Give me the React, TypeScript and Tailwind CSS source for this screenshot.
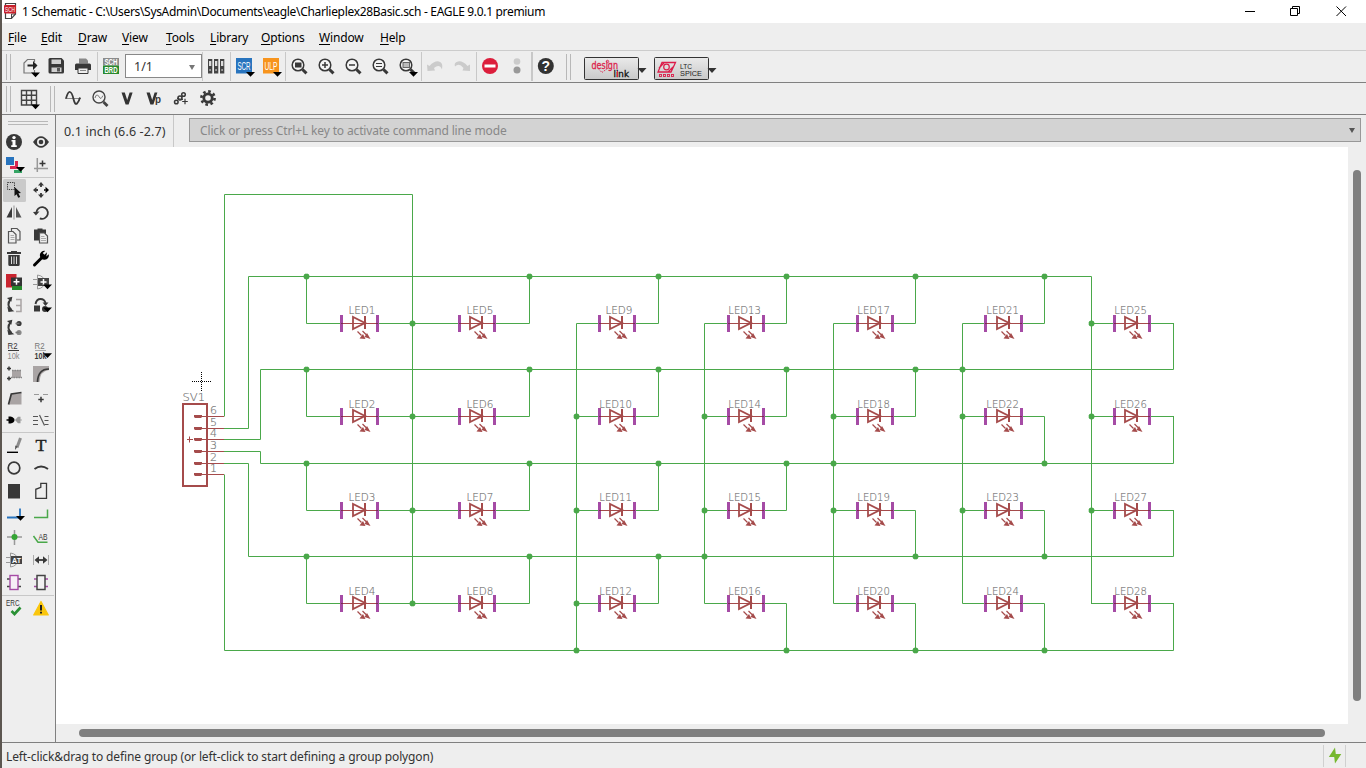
import React from "react";

const DARK = "#383838";
const GRAY = "#a9a4a4";
const GREEN = "#4aa84a";
const RED = "#a54b4b";
const PURPLE = "#a54ba5";

/* Drop-down marker under a tool button, x/y is the left top corner. */
const Drop = ({ x, y }: { x: number; y: number }) => (
  <path d={`M${x} ${y}h9l-4.5 4.8z`} fill="#000" />
);

const Plus = ({ x, y, r = 2.5, w = 1.5, c = DARK }: { x: number; y: number; r?: number; w?: number; c?: string }) => (
  <path d={`M${x - r} ${y}h${2 * r}M${x} ${y - r}v${2 * r}`} stroke={c} strokeWidth={w} fill="none" />
);

const IconText = ({ x, y, s, w, c = DARK, b = false, children }: { x: number; y: number; s: number; w: number; c?: string; b?: boolean; children: string }) => (
  <text x={x} y={y} fontSize={s} textLength={w} lengthAdjust="spacingAndGlyphs" fill={c} fontWeight={b ? 700 : 400} fontFamily="'Liberation Sans', sans-serif">
    {children}
  </text>
);

/* ---------- side palette ---------- */

const section1 = [
  <>
    <circle cx="14" cy="142" r="8" fill={DARK} />
    <circle cx="14" cy="137.6" r="1.7" fill="#fff" />
    <path d="M11.500 140h4v5.300h1.300v1.600h-5.600v-1.600h1.300v-3.700h-1z" fill="#fff" />
  </>,
  <>
    <path d="M33 142q8-11.5 16 0q-8 11.5-16 0z" fill={DARK} />
    <circle cx="41" cy="142" r="4" fill="#eee" />
    <circle cx="41" cy="142" r="2.3" fill={DARK} />
  </>,
  <>
    <rect x="6" y="157" width="8" height="8" fill="#2874be" />
    <path d="M15 161h3v8h-8v-3h5z" fill="#da2550" />
    <path d="M14 170h8v3h-8z" fill="#35a565" />
    <Drop x={16} y={167} />
  </>,
  <>
    <path d="M37.3 158v14M34 168.6h14" stroke="#999" strokeWidth="1.500" />
    <Plus x={42.5} y={163.5} r={3} />
  </>,
];

const section2 = [
  <>
    <rect x="3" y="179" width="23" height="23" rx="1.5" fill="#cacaca" />
    <rect x="7.5" y="182.5" width="7" height="7" fill="none" stroke={DARK} strokeDasharray="1.3 1" />
    <path d="M14.500 187l6.500 6-2.600.3 1.800 3.600-2 .9-1.600-3.600-2.100 1.700z" fill="#111" />
  </>,
  <>
    <path d="M41 182l3 3.500h-6zM41 198l3-3.500h-6zM33 190l3.500-3v6z" fill={DARK} />
    <path d="M49 190l-3.500-3.300v6.600z" fill="#000" />
    <path d="M41 185v2M41 193v2M36 190h2M44 190h2" stroke={DARK} strokeWidth="1.8" />
  </>,
  <>
    <path d="M6.500 217.500h5.500v-10.500z" fill={DARK} />
    <path d="M21.500 217.500h-5.500v-10.500z" fill="#555" />
    <path d="M14 205.500v14" stroke="#b5b5b5" strokeWidth="1.6" />
  </>,
  <>
    <path d="M36.300 213a5.800 5.800 0 1 1 3.500 5.300" fill="none" stroke={DARK} strokeWidth="1.800" />
    <path d="M33 212l6.500-.5-3.600 4z" fill={DARK} />
  </>,
  <>
    <path d="M11.500 231v-2.500h5.500l3 3v8.500h-3" fill="none" stroke="#555" strokeWidth="1.200" />
    <path d="M8.500 231.500h4.500l3 3v8.500h-7.500z" fill="#eee" stroke="#555" strokeWidth="1.200" />
    <path d="M10.500 235.500h3.500M10.500 237.500h4M10.500 239.500h4" stroke="#999" strokeWidth=".8" />
  </>,
  <>
    <path d="M34 229.500h3.500v-1h5v1h3.500v11h-12z" fill={DARK} />
    <path d="M39.500 233h5l3 3v7h-8z" fill="#eee" stroke="#555" strokeWidth="1.200" />
    <path d="M41 236.500h3.500M41 238.500h5M41 240.500h5" stroke="#999" strokeWidth=".8" />
  </>,
  <>
    <path d="M7 254h14v-2h-4v-1h-6v1h-4zM8.300 255h11.400v9.500a1.500 1.500 0 0 1-1.500 1.500h-8.400a1.500 1.500 0 0 1-1.500-1.500z" fill={DARK} />
    <path d="M11.500 256.500v7.500M14 256.500v7.500M16.500 256.500v7.500" stroke="#ddd" strokeWidth="1" />
  </>,
  <>
    <path d="M34.500 265l8-8" stroke="#000" strokeWidth="3" strokeLinecap="round" />
    <path d="M47 252.300l-2.500 2.400-1.800-1.600 2.500-2.200a4.500 4.500 0 1 0 3.500 3.300l-2.400 2.400z" fill="#000" />
  </>,
  <>
    <rect x="6" y="274" width="10.500" height="13.500" fill="#c9242f" />
    <rect x="12" y="283" width="10" height="7" fill="#268a2c" />
    <rect x="11" y="277.500" width="11" height="8.500" fill="#333" />
    <Plus x={16.500} y={281.700} c="#fff" r={3} />
  </>,
  <>
    <path d="M33 279.500h5M33 284.500h5M37.500 275v14q7-1 7-7t-7-7" fill="none" stroke="#999" />
    <rect x="38" y="278" width="11" height="8" fill="#444" />
    <Plus x={43.500} y={282} c="#fff" r={3} />
    <Drop x={43} y={284.500} />
  </>,
  <>
    <path d="M10.500 299.500q-4.500 5 1 10.500" fill="none" stroke={DARK} strokeWidth="1.900" />
    <path d="M8.500 297.500h5.500l-2 4.500zM7 306l0 5.500 6 .5z" fill={DARK} transform="rotate(-12 10 305)" />
    <path d="M16 299.500h5v12h-5M16 305.500h5" fill="none" stroke={GRAY} strokeWidth="1.500" />
  </>,
  <>
    <path d="M35.500 304q1-5 5-5t5 4" fill="none" stroke={DARK} strokeWidth="1.900" />
    <path d="M42.500 302.500h6l-3 3.500z" fill={DARK} />
    <rect x="34" y="305.500" width="6" height="6" fill={DARK} />
    <circle cx="45" cy="309" r="3" fill={DARK} />
    <Drop x={43} y={307.500} />
  </>,
  <>
    <path d="M10.500 322.500q-4.500 5 1 10.500" fill="none" stroke={DARK} strokeWidth="1.900" />
    <path d="M8.500 320.500h5.500l-2 4.500zM7 329l0 5.500 6 .5z" fill={DARK} transform="rotate(-12 10 328)" />
    <circle cx="19" cy="323.500" r="2.600" fill={DARK} />
    <circle cx="19" cy="332.500" r="2.600" fill="#888" />
    <path d="M15.500 323.500h4M15.500 332.500h4" stroke="#777" strokeWidth="1.500" />
  </>,
  null,
  <>
    <IconText x={7.500} y={349} s={8.500} w={10}>R2</IconText>
    <path d="M8 350.500h11" stroke={DARK} />
    <IconText x={7.500} y={359} s={8.500} w={12} c="#888">10k</IconText>
  </>,
  <>
    <IconText x={34.500} y={349} s={8.500} w={10} c="#777">R2</IconText>
    <path d="M35 350.500h11" stroke="#aaa" />
    <IconText x={34.500} y={359} s={8.500} w={12} b>10k</IconText>
    <Drop x={43} y={353.200} />
  </>,
  <>
    <Plus x={9} y={368.500} r={2} />
    <Plus x={9} y={378.500} r={2} />
    <path d="M12 370h9v8h-9z" fill={GRAY} />
    <path d="M12 370.500h10M11 377.500h11" stroke="#888" strokeDasharray="1.500 1" strokeWidth="1.500" />
  </>,
  <>
    <path d="M33 366h16v4q-9 1-9.500 12h-6.500z" fill={GRAY} />
    <path d="M49 369q-11 0-11.500 13" fill="none" stroke={DARK} strokeWidth="1.700" />
  </>,
  <>
    <path d="M9 404.500l2-10.500 10.500-1v11.500z" fill={GRAY} />
    <path d="M8.500 404.500l2.800-10.500 10.200-1.500" fill="none" stroke={DARK} strokeWidth="1.700" />
  </>,
  <>
    <path d="M34 394.500h5M43 394.500h5" stroke="#999" strokeWidth="1.200" />
    <Plus x={41} y={399.500} r={2.700} />
  </>,
  <>
    <path d="M6.500 420h5" stroke="#000" strokeWidth="1.500" />
    <path d="M8.500 416.500h2q4 1 4 3.500t-4 3.500h-2z" fill="#000" />
    <path d="M22 420h-3" stroke="#aaa" />
    <path d="M15 420l3-3.200h2.500v6.400h-2.500z" fill="#999" />
  </>,
  <>
    <path d="M33 416.500h5M33 420.500h5M33 424.500h5M44.500 416.500h4M44.500 420.500h4M44.500 424.500h4" stroke="#555" strokeWidth="1.200" />
    <path d="M39.500 415l5 10.500" stroke="#555" strokeWidth="1.200" />
  </>,
];

const section3 = [
  <>
    <path d="M20.500 438l-3.500 9.500" stroke="#8c8c8c" strokeWidth="3" />
    <path d="M17.800 446.500l-2.800 3.500.3-4.500z" fill="#555" />
    <path d="M7 452.300h11" stroke="#000" strokeWidth="1.400" />
  </>,
  <text x="35.500" y="451" fontSize="17" textLength="11" lengthAdjust="spacingAndGlyphs" fill="#222" stroke="#222" strokeWidth=".4" fontFamily="'Liberation Serif', serif">T</text>,
  <circle cx="14" cy="468" r="5.800" fill="none" stroke={DARK} strokeWidth="1.700" />,
  <path d="M34.500 469q6.500-5 13.500 0" fill="none" stroke={DARK} strokeWidth="1.900" />,
  <rect x="8" y="484" width="12" height="14.500" fill={DARK} />,
  <path d="M35.800 498.300v-9l5-2v-4h5.700v15z" fill="none" stroke={DARK} strokeWidth="1.300" />,
  <>
    <path d="M7 517.500h13v-9" fill="none" stroke="#2874be" strokeWidth="1.800" />
    <Drop x={16} y={516} />
  </>,
  <path d="M34 517.500h13.500v-8" fill="none" stroke={GREEN} strokeWidth="1.500" />,
  <>
    <path d="M7 537h15M14.500 530v15" stroke="#999" strokeWidth="1.500" />
    <circle cx="14.500" cy="537" r="3" fill="#35a535" />
  </>,
  <>
    <path d="M33.500 536l4.500 6.300h9.500" fill="none" stroke={GREEN} strokeWidth="1.500" />
    <IconText x={38.500} y={540} s={9} w={9}>AB</IconText>
  </>,
  <>
    <path d="M6 557.500h5M6 562.500h5M10.500 553v14q7-1 7-7t-7-7" fill="none" stroke="#999" />
    <rect x="11" y="556" width="11" height="8" fill="#444" />
    <IconText x={12} y={563} s={7.500} w={9} c="#fff" b>AT</IconText>
  </>,
  <>
    <path d="M33.500 555v10M48.500 555v10" stroke="#aaa" />
    <path d="M37 560h8" stroke={DARK} strokeWidth="1.800" />
    <path d="M34.500 560l4.500-3.800v7.600zM47.500 560l-4.500-3.800v7.600z" fill={DARK} />
  </>,
  <>
    <path d="M7 579h3M7 586.500h3M18 579h3M18 586.500h3" stroke="#444" strokeWidth="1.300" />
    <rect x="10" y="575.500" width="8" height="14" fill="#f7eef7" stroke={PURPLE} strokeWidth="1.400" />
  </>,
  <>
    <path d="M34 579h3M34 586.500h3M45 579h3M45 586.500h3" stroke={PURPLE} strokeWidth="1.300" />
    <rect x="37" y="575.500" width="8" height="14" fill="#f2f2f2" stroke="#444" strokeWidth="1.500" />
  </>,
];

const section4 = [
  <>
    <IconText x={6} y={606} s={9} w={13.5}>ERC</IconText>
    <path d="M11.500 611l3 3 6-6.500" fill="none" stroke="#2a9135" strokeWidth="2.600" />
  </>,
  <>
    <path d="M41 601.500l7.300 13.500h-14.600z" fill="#fac60d" stroke="#fac60d" strokeLinejoin="round" strokeWidth="1.200" />
    <path d="M41 605v5.500M41 611.800v1.800" stroke="#222" strokeWidth="2" />
  </>,
];

const ToolGrid = ({ top, items }: { top: number; items: (React.ReactElement | null)[] }) => (
  <div className="grid w-[51px] grid-cols-[24px_24px] gap-x-[3px]">
    {items.map((item, i) => (
      <svg key={i} className="block" width="24" height="23" viewBox={`${i % 2 ? 29 : 2} ${top + 23 * Math.floor(i / 2)} 24 23`}>
        {item}
      </svg>
    ))}
  </div>
);

const SideRule = () => <div className="mb-px h-px w-[52px] bg-[#c8c8c8]" />;

/* ---------- top toolbars ---------- */

const Cell = ({ x, y = 51, w = 27, children }: { x: number; y?: number; w?: number; children: React.ReactNode }) => (
  <svg className="block shrink-0" width={w} height="31" viewBox={`${x} ${y} ${w} 31`}>
    {children}
  </svg>
);

const Sep = () => <div className="mt-px h-[29px] w-px shrink-0 bg-[#c8c8c8]" />;
const Handle = () => <div className="mt-[3px] h-[26px] w-[5px] shrink-0 border-x border-[#b8b8b8]" />;

const Lens = ({ x, children }: { x: number; children?: React.ReactNode }) => (
  <>
    <circle cx={x - 1} cy="65" r="5.800" fill="#f4f4f4" stroke={DARK} strokeWidth="1.500" />
    <path d={`M${x + 3.500} 69.500l4 3.800`} stroke={DARK} strokeWidth="3" />
    {children}
  </>
);

const MainToolbar = () => (
  <div className="flex h-8 shrink-0 border-b border-[#808080] pl-1">
    <Handle />
    <div className="w-1.5 shrink-0" />
    <Cell x={17}>
      <path d="M34.500 62v-2.500h-7l-3.500 3.500v10h10.500v-3" fill="none" stroke="#777" strokeWidth="1.200" />
      <path d="M27.500 64.500h5.500v-3.500l4.500 4.500-4.500 4.500v-3.500h-5.500z" fill="#222" />
      <Drop x={31} y={72.500} />
    </Cell>
    <Cell x={44} w={26}>
      <path d="M48.500 59.500q0-1.500 1.500-1.500h11.500l2.500 2.500v11.500q0 1.500-1.500 1.500h-12.500q-1.500 0-1.500-1.500z" fill={DARK} />
      <path d="M51.500 59.500h9.500v4.500h-9.500zM51.500 67.500h10v4.500h-10z" fill="#d0d0d0" />
      <path d="M57 68h3v3.500h-3z" fill="#555" />
    </Cell>
    <Cell x={70}>
      <path d="M79 58.500h7l2 2v3h-9z" fill="#888" />
      <path d="M75 65q0-1.500 1.500-1.500h13q1.500 0 1.500 1.500v5h-16z" fill={DARK} />
      <path d="M78 68h10v5.500h-10z" fill="#eee" stroke={DARK} />
      <path d="M80 70.500h6" stroke="#888" />
    </Cell>
    <Sep />
    <Cell x={98}>
      <rect x="103" y="58" width="16" height="7.500" fill="#8b8b8b" />
      <rect x="103" y="65.500" width="16" height="8.500" fill="#2a8a2e" />
      <IconText x={104.500} y={65} s={8.500} w={13} c="#fff" b>SCH</IconText>
      <IconText x={104.500} y={73} s={8.500} w={13} c="#fff" b>BRD</IconText>
    </Cell>
    <div className="mt-[3px] flex h-6 w-[77px] shrink-0 items-center justify-between border border-[#888] bg-white pt-0.5 pr-1.5 pl-2 text-[12.500px] text-[#333]">
      <span>1/1</span>
      <svg width="6" height="5" viewBox="0 0 6 5"><path d="M0 0h6l-3 5z" fill="#777" /></svg>
    </div>
    <Sep />
    <Cell x={203}>
      {[208, 214, 220].map((x) => (
        <g key={x}>
          <rect x={x} y="59" width="4.300" height="14.500" fill="#444" />
          <rect x={x + 1} y="61" width="2.300" height="5" fill="#ddd" />
          <rect x={x + 1.200} y="69" width="1.800" height="2" fill="#999" />
        </g>
      ))}
    </Cell>
    <Sep />
    <Cell x={231}>
      <rect x="236" y="58" width="16" height="15.500" fill="#2874be" />
      <IconText x={237.500} y={69.500} s={10} w={13} c="#fff">SCR</IconText>
      <Drop x={246} y={72} />
    </Cell>
    <Cell x={258}>
      <rect x="263" y="58" width="16" height="15.500" fill="#f7941d" />
      <IconText x={264.500} y={69.500} s={10} w={13} c="#fff">ULP</IconText>
      <Drop x={273} y={72} />
    </Cell>
    <Sep />
    <Cell x={286}>
      <Lens x={299}><rect x="295" y="62.500" width="6.500" height="5" fill={DARK} /></Lens>
    </Cell>
    <Cell x={313}><Lens x={326}><Plus x={325} y={65} r={3} /></Lens></Cell>
    <Cell x={340}><Lens x={353}><path d="M349 65h6" stroke={DARK} strokeWidth="1.500" /></Lens></Cell>
    <Cell x={367}><Lens x={380}><path d="M376 63.500h6M376 66.500h6" stroke={DARK} strokeWidth="1.200" /></Lens></Cell>
    <Cell x={394}>
      <Lens x={407}><rect x="403" y="62.500" width="6.500" height="5" fill="#bbb" stroke="#666" /></Lens>
      <Drop x={409} y={72} />
    </Cell>
    <Sep />
    <Cell x={422}>
      <path d="M427 64.500l2.500 1.500q5-5.500 9.500-4.500t3 8q-2.500-6-8-1.500l1 2.500-7.500.5z" fill="#cbcbcb" />
    </Cell>
    <Cell x={449}>
      <path d="M470 64.500l-2.500 1.500q-5-5.500-9.500-4.500t-3 5q4-4 8.500 1.500l-1 2.500 7.500.5z" fill="#cbcbcb" />
    </Cell>
    <Sep />
    <Cell x={477}>
      <circle cx="490" cy="66" r="8" fill="#dc1e3c" />
      <rect x="484.500" y="64.500" width="11" height="3" fill="#fff" />
    </Cell>
    <Cell x={504}>
      <circle cx="517" cy="61.500" r="3.300" fill="#cbcbcb" />
      <circle cx="517" cy="70" r="3.500" fill="#999" />
    </Cell>
    <div className="mt-px h-[29px] w-0.5 shrink-0 bg-[#c8c8c8]" />
    <Cell x={533}>
      <circle cx="545.800" cy="66" r="8" fill="#333" />
      <text x="541.500" y="71" fontSize="14" fontWeight="700" fill="#fff" fontFamily="'Liberation Sans', sans-serif">?</text>
    </Cell>
    <div className="w-1.5 shrink-0" />
    <Handle />
    <div className="w-[13px] shrink-0" />
    <Cell x={584} w={70}>
      <defs>
        <linearGradient id="btn" x1="0" y1="0" x2="0" y2="1">
          <stop offset="0" stopColor="#eaeaea" />
          <stop offset="1" stopColor="#c9c9c9" />
        </linearGradient>
      </defs>
      <rect x="584.500" y="57.500" width="54" height="22" rx="1" fill="url(#btn)" stroke="#333" />
      <text x="591.500" y="69" fontSize="10" textLength="26.500" lengthAdjust="spacingAndGlyphs" fill="#dc1e4b" stroke="#dc1e4b" strokeWidth=".3" fontFamily="'DejaVu Sans', sans-serif">design</text>
      <path d="M599 69.500l3 3 6-4.500" fill="none" stroke="#dc1e4b" strokeDasharray="1.200 1" />
      <circle cx="607.500" cy="61.500" r="1.200" fill="none" stroke="#dc1e4b" strokeWidth=".9" />
      <text x="613.500" y="77" fontSize="9" textLength="15.500" lengthAdjust="spacingAndGlyphs" fill="#111" stroke="#111" strokeWidth=".3" fontFamily="'DejaVu Sans', sans-serif">link</text>
      <path d="M617.500 71v6" stroke="#dc1e4b" />
      <path d="M637.500 68h9l-4.500 5z" fill="#333" />
    </Cell>
    <Cell x={654} w={70}>
      <rect x="654.500" y="57.500" width="54" height="22" rx="1" fill="url(#btn)" stroke="#333" />
      <path d="M662 62.500h13.500l-4.500 9.500h-13zM659 68l5-5M668 72l5-5" fill="none" stroke="#dc1e4b" strokeWidth="1.300" />
      <circle cx="666.500" cy="67" r="2.800" fill="none" stroke="#dc1e4b" strokeWidth="1.200" />
      {[659.500, 663.500, 667.500, 671.500].map((x) => (
        <rect key={x} x={x} y="74.500" width="2" height="2" fill="none" stroke="#dc1e4b" strokeWidth=".9" />
      ))}
      <IconText x={680} y={69} s={7} w={12} c="#222">LTC</IconText>
      <IconText x={680} y={76} s={7} w={22} c="#222">SPICE</IconText>
      <path d="M707.500 68h9l-4.500 5z" fill="#333" />
    </Cell>
  </div>
);

const SimToolbar = () => (
  <div className="flex h-8 shrink-0 border-b border-[#808080] pl-1">
    <Handle />
    <div className="w-1.5 shrink-0" />
    <Cell x={17} y={83}>
      <path d="M21.500 90.500h15v14.500h-15zM21.500 95.300h15M21.500 100.200h15M26.500 90.500v14.500M31.500 90.500v14.500" fill="none" stroke="#444" strokeWidth="1.400" />
      <Drop x={31} y={104.500} />
    </Cell>
    <div className="w-1.5 shrink-0" />
    <Handle />
    <div className="w-1 shrink-0" />
    <Cell x={59} y={83}>
      <path d="M65 98.500h16" stroke="#888" />
      <path d="M66 98.500q2-7 4-6.500t3.500 7t3.500 4.500t3-6" fill="none" stroke={DARK} strokeWidth="1.800" />
    </Cell>
    <Cell x={86} y={83}>
      <circle cx="99" cy="97" r="6" fill="#f2f2f2" stroke="#444" strokeWidth="1.400" />
      <path d="M95 98q1.500-5 3.500-2t2.500 2.500t2-3" fill="none" stroke="#777" />
      <path d="M103.500 102l4 4" stroke="#444" strokeWidth="2.800" />
    </Cell>
    <Cell x={113} y={83}>
      <path d="M121.500 92.500h3.300l2.400 7.500 2.400-7.500h3l-4 12h-3z" fill="#333" />
    </Cell>
    <Cell x={140} y={83}>
      <path d="M146.500 92.500h3.300l2.400 7.500 2.400-7.500h2.800l-4 12h-3z" fill="#333" />
      <IconText x={155} y={103} s={10} w={6} b>p</IconText>
    </Cell>
    <Cell x={167} y={83}>
      <circle cx="183.500" cy="94.500" r="1.800" fill="none" stroke={DARK} strokeWidth="1.500" />
      <circle cx="180" cy="98" r="2" fill="none" stroke={DARK} strokeWidth="1.600" />
      <circle cx="176.300" cy="102" r="1.800" fill="none" stroke={DARK} strokeWidth="1.500" />
      <path d="M177 98.500l6 1" stroke={DARK} />
      <Plus x={185} y={101.500} r={2.800} w={1.200} />
    </Cell>
    <Cell x={194} y={83}>
      <circle cx="208" cy="98" r="6.600" fill="none" stroke={DARK} strokeWidth="2.600" strokeDasharray="2.590 2.590" />
      <circle cx="208" cy="98" r="4.200" fill="none" stroke={DARK} strokeWidth="2.800" />
    </Cell>
  </div>
);

/* ---------- schematic ---------- */

const rows = [323, 416, 510, 603];
const columns = [340, 458, 598, 727, 856, 984, 1113];

const wires = [
  "M224.500 416.500V194.500H412.500V603.500",
  "M224 428.500H248.500V276.500H1091.500V603.500",
  "M224 439.500H260.500V369.500H1173.500V323.500",
  "M224 451.500H260.500V463.500H1173.500V416.500",
  "M224 463.500H248.500V556.500H1173.500V510.500",
  "M224.500 474.500V650.500H1173.500V603.500",
  "M306.500 276.500V323.500H341M306.500 369.500V416.500H341M306.500 463.500V510.500H341M306.500 556.500V603.500H341",
  "M377 323.500H460M377 416.500H460M377 510.500H460M377 603.500H460",
  "M494 323.500H529.500V276.500M494 416.500H529.500V369.500M494 510.500H529.500V463.500M494 603.500H529.500V556.500",
  "M600 323.500H576.500V650.500M600 416.500H576.500M600 510.500H576.500M600 603.500H576.500",
  "M634 323.500H658.500V276.500M634 416.500H658.500V369.500M634 510.500H658.500V463.500M634 603.500H658.500V556.500",
  "M729 323.500H704.500V603.500H729M729 416.500H704.500M729 510.500H704.500",
  "M763 323.500H786.500V276.500M763 416.500H786.500V369.500M763 510.500H786.500V463.500M763 603.500H786.500V650.500",
  "M858 323.500H833.500V603.500H858M858 416.500H833.500M858 510.500H833.500",
  "M892 323.500H915.500V276.500M892 416.500H915.500V369.500M892 510.500H915.500V556.500M892 603.500H915.500V650.500",
  "M986 323.500H962.500V603.500H986M986 416.500H962.500M986 510.500H962.500",
  "M1020 323.500H1044.500V276.500M1020 416.500H1044.500V463.500M1020 510.500H1044.500V556.500M1020 603.500H1044.500V650.500",
  "M1091 323.500H1115M1091 416.500H1115M1091 510.500H1115M1091 603.500H1115",
  "M1149 323.500H1174M1149 416.500H1174M1149 510.500H1174M1149 603.500H1174",
];

const junctions: [number, number[]][] = [
  [306, [276, 369, 463, 556]],
  [412, [323, 416, 510, 603]],
  [529, [276, 369, 463, 556]],
  [576, [416, 510, 603, 650]],
  [658, [276, 369, 463, 556]],
  [704, [416, 510, 556]],
  [786, [276, 369, 463, 650]],
  [833, [416, 463, 510]],
  [915, [276, 369, 556, 650]],
  [962, [369, 416, 510]],
  [1044, [276, 463, 556, 650]],
  [1091, [323, 416, 510]],
];

const pins: [number, number][] = [[6, 416], [5, 428], [4, 439], [3, 451], [2, 463], [1, 474]];

const VectorText = ({ x, y, s = 11, w, children }: { x: number; y: number; s?: number; w: number; children: React.ReactNode }) => (
  <text x={x} y={y} fontSize={s} fontWeight="200" textLength={w} lengthAdjust="spacingAndGlyphs" fill="#707070" stroke="#707070" strokeWidth=".15" fontFamily="'DejaVu Sans Light', 'DejaVu Sans', sans-serif">
    {children}
  </text>
);

const Led = ({ n, x, y, dy }: { n: number; x: number; y: number; dy: number }) => {
  const narrow = n < 10;
  const right = x === 340 || x === 984 ? 36 : 35;
  const d = x + right - 35;
  const labelX = narrow ? x + (x === 598 ? 7.500 : 8.500) : d + 1.300;
  return (
    <g>
      <path d={`M${x + 2} ${y + 0.5}h${right}`} stroke={RED} />
      <rect x={x} y={y - 8} width="3" height="17" fill={PURPLE} />
      <rect x={x + right} y={y - 8} width="3" height="17" fill={PURPLE} />
      <path d={`M${x + 1} ${y + 0.5}h2M${x + right} ${y + 0.5}h2`} stroke="#7a2c52" />
      <path d={`M${d + 12} ${y - 6}v12l12-6z`} fill="none" stroke={RED} strokeWidth="1.800" />
      <path d={`M${d + 24} ${y - 7}v13`} stroke={RED} strokeWidth="2" />
      <path d={`M${d + 16.500} ${y + 8.500}l4 4M${d + 21.500} ${y + 8}l4 4`} stroke={RED} strokeWidth="1.200" />
      <path d={`M${d + 18.500} ${y + 15.500}l3.500-4.500 2.500 5zM${d + 23.500} ${y + 14}l2.500-4 3.500 6z`} fill={RED} />
      <VectorText x={labelX} y={y + dy} w={narrow ? 27 : 32.500}>{`LED${n}`}</VectorText>
    </g>
  );
};

const Schematic = () => (
  <svg className="block h-[577px] w-[1292px] bg-white" viewBox="56 147 1292 577">
    <path d={wires.join("")} fill="none" stroke={GREEN} />
    {junctions.map(([x, ys]) =>
      ys.map((y) => <path key={`${x}-${y}`} d={`M${x - 1} ${y - 2}h3l1 1v3l-1 1h-3l-1-1v-3z`} fill={GREEN} stroke={GREEN} strokeWidth=".6" />),
    )}
    {columns.map((x, c) => rows.map((y, r) => <Led key={`${c}-${r}`} n={c * 4 + r + 1} x={x} y={y} dy={r % 2 ? -8 : -9} />))}

    <rect x="183" y="404" width="24" height="82" fill="none" stroke={RED} strokeWidth="2" />
    <path d="M187 439.500h6M189.500 436.500v6" stroke={RED} />
    {pins.map(([n, y]) => (
      <g key={n}>
        <path d={`M198 ${y + 0.5}h26`} stroke={RED} />
        <path d={`M194 ${y - 1}h8v2l-1 1h-6l-1-1z`} fill={RED} />
        <VectorText x={210} y={y - 2} s={10} w={7}>{n}</VectorText>
      </g>
    ))}
    <VectorText x={182.500} y={401} w={22.500}>SV1</VectorText>
    <path d="M192 381.500h19M201.500 372v19" stroke="#000" strokeDasharray="1 1" />
  </svg>
);

/* ---------- window ---------- */

const menus: [string, string][] = [
  ["File", "w-[33px]"],
  ["Edit", "w-[37px]"],
  ["Draw", "w-[44px]"],
  ["View", "w-[44px]"],
  ["Tools", "w-[44px]"],
  ["Library", "w-[51px]"],
  ["Options", "w-[58px]"],
  ["Window", "w-[61px]"],
  ["Help", "w-[40px]"],
];

export default function App() {
  return (
    <div className="flex h-[768px] w-[1366px] overflow-hidden bg-[#eeeeee] font-['Noto_Sans','Open_Sans',sans-serif] text-[12px]">
      <div className="w-0.5 shrink-0 bg-[#5c5650]" />
      <div className="flex min-w-0 flex-1 flex-col">
        <header className="flex h-[23px] shrink-0 items-center bg-white pl-px text-black">
          <svg className="overflow-visible" width="15" height="19" viewBox="3 2 15 19">
            <path d="M5.500 3.500h10v10.500l-4 4.500h-6z" fill="#fff" stroke="#444" strokeWidth="1.200" />
            <path d="M15.500 14h-4v4.500" fill="none" stroke="#444" />
            <rect x="4" y="5" width="12" height="8.500" rx="1" fill="#c8202c" />
            <IconText x={5} y={12} s={7} w={10} c="#fff">SCH</IconText>
          </svg>
          <span className="ml-[4px] pt-px text-[12px] leading-[22px] tracking-[-0.32px] whitespace-nowrap">1 Schematic - C:\Users\SysAdmin\Documents\eagle\Charlieplex28Basic.sch - EAGLE 9.0.1 premium</span>
          <div className="flex-1" />
          <svg className="mr-[18px]" width="104" height="22" viewBox="1244 0 104 22">
            <path d="M1245 10.500h10" stroke="#000" />
            <path d="M1290.500 7.500h7v7h-7zM1292.500 7v-1.500h7v7h-1.500M1336.500 5.500l9.500 9.500M1346 5.500l-9.500 9.500" fill="none" stroke="#000" />
          </svg>
        </header>
        <nav className="flex h-7 shrink-0 items-center border-b border-[#cccccc] pt-[3px] pl-1.5 text-[12px] tracking-[-0.15px] text-black">
          {menus.map(([name, width]) => (
            <span key={name} className={`${width} shrink-0 whitespace-nowrap`}>
              <span className="underline underline-offset-2">{name[0]}</span>
              {name.slice(1)}
            </span>
          ))}
        </nav>
        <MainToolbar />
        <SimToolbar />
        <div className="flex h-[628px] shrink-0 border-b border-[#808080]">
          <aside className="flex w-[54px] shrink-0 flex-col border-r border-[#808080] pt-1.5">
            <div className="mb-1.5 ml-1.5 h-1 w-10 border-y border-[#b8b8b8]" />
            <ToolGrid top={131} items={section1} />
            <SideRule />
            <ToolGrid top={179} items={section2} />
            <SideRule />
            <ToolGrid top={434} items={section3} />
            <SideRule />
            <ToolGrid top={597} items={section4} />
          </aside>
          <main className="flex min-w-0 flex-1 flex-col">
            <div className="flex h-8 shrink-0">
              <div className="flex h-8 w-[118px] shrink-0 items-center border-r border-[#c8c8c8] pt-0.5 pl-2 text-[12.500px] tracking-[0.15px] whitespace-nowrap text-[#333]">0.1 inch (6.6 -2.7)</div>
              <div className="mt-[3px] ml-[15px] flex h-6 w-[1172px] items-center justify-between border border-[#989898] bg-[#d3d3d3] pr-[5px] pl-2.5 text-[12px] tracking-[-0.14px] text-[#888]">
                <span className="pt-0.5">Click or press Ctrl+L key to activate command line mode</span>
                <svg width="6" height="5" viewBox="0 0 6 5"><path d="M0 0h6l-3 5z" fill="#555" /></svg>
              </div>
            </div>
            <div className="flex h-[577px] shrink-0">
              <Schematic />
              <div className="mt-[23px] ml-[5px] h-[531px] w-2 rounded-full bg-[#808080]" />
            </div>
            <div className="mt-[5px] ml-[23px] h-2 w-[1246px] rounded-full bg-[#808080]" />
          </main>
        </div>
        <footer className="flex h-[25px] shrink-0 items-center pl-1 text-[#333]">
          <span className="flex-1 pt-0.5 tracking-[-0.12px] whitespace-nowrap">Left-click&amp;drag to define group (or left-click to start defining a group polygon)</span>
          <div className="mr-[20px] flex h-[22px] w-[23px] items-center justify-center border-x border-[#d0d0d0]">
            <svg width="14" height="18" viewBox="0 0 14 18">
              <path d="M7 .5L.8 10h5.400l.8 6.500 6.300-9.500h-5.500z" fill="#76b82f" />
            </svg>
          </div>
        </footer>
      </div>
    </div>
  );
}
